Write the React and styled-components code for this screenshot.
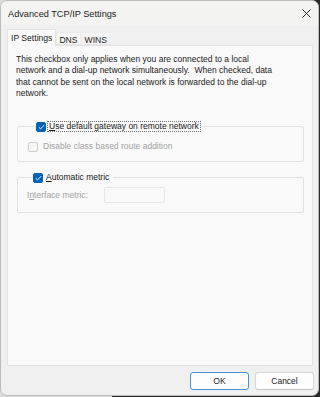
import React from "react";
import styled, { createGlobalStyle } from "styled-components";

const Global = createGlobalStyle`
  html, body { margin: 0; padding: 0; }
  body {
    width: 320px;
    height: 397px;
    overflow: hidden;
    background: linear-gradient(to right, #dcdcdc 0, #dcdcdc 112px, #2a2a2a 112px);
    font-family: "Liberation Sans", Arial, sans-serif;
  }
  * { box-sizing: border-box; }
`;

const Window = styled.div`
  width: 319px;
  height: 396px;
  border: 1px solid #bdbdbd;
  border-radius: 7px;
  background: #f0f0f0;
  display: flex;
  flex-direction: column;
  overflow: hidden;
`;

const TitleBar = styled.div`
  height: 24px;
  flex: none;
  display: flex;
  align-items: center;
  padding: 0 7px 0 7px;
  background: #f3f3f2;
`;

const Title = styled.div`
  font-size: 9.2px;
  color: #1b1b1b;
  flex: 1;
  padding-top: 1px;
`;

const CloseButton = styled.div`
  width: 9px;
  height: 9px;
  display: flex;
  margin-top: 1px;
  svg { display: block; }
`;

const Body = styled.div`
  flex: 1;
  display: flex;
  flex-direction: column;
  padding: 4px 5px 0 6px;
`;

const TabList = styled.div`
  display: flex;
  align-items: flex-end;
  height: 16px;
  flex: none;
`;

const Tab = styled.div`
  position: relative;
  z-index: ${(p) => (p.$active ? 1 : 0)};
  height: ${(p) => (p.$active ? "17px" : "13px")};
  margin-bottom: ${(p) => (p.$active ? "-1px" : "0")};
  margin-left: ${(p) => (p.$gap ? "1px" : "0")};
  padding: ${(p) => (p.$active ? "3px 3px 0" : "2px 2px 0")};
  font-size: 8.6px;
  color: #1a1a1a;
  background: ${(p) => (p.$active ? "#f9f9f9" : "#f5f5f5")};
  border: 1px solid ${(p) => (p.$active ? "#e4e4e4" : "#ececec")};
  border-bottom: ${(p) => (p.$active ? "none" : "1px solid #e4e4e4")};
  white-space: nowrap;
`;

const Panel = styled.div`
  flex: 1;
  display: flex;
  flex-direction: column;
  background: #f9f9f9;
  border: 1px solid #e4e4e4;
  padding: 8px 8px 0 8px;
`;

const Paragraph = styled.p`
  margin: 0;
  font-size: 8.5px;
  line-height: 11.3px;
  color: #1a1a1a;
  white-space: nowrap;
`;

const Group = styled.fieldset`
  margin: ${(p) => p.$top}px 0 0 1px;
  padding: 0 0 ${(p) => p.$bottom}px ${(p) => p.$inset}px;
  border: 1px solid #e0e0e0;
  border-radius: 2px;
  min-width: 0;
`;

const Legend = styled.legend`
  display: flex;
  align-items: center;
  gap: 1px;
  height: 11px;
  padding: 0 2px 0 0;
  margin-left: ${(p) => p.$offset}px;
`;

const Box = styled.span`
  width: 10px;
  height: 10px;
  flex: none;
  border-radius: 2px;
  display: flex;
  align-items: center;
  justify-content: center;
  background: ${(p) => (p.$checked ? "#0063b8" : "#f6f6f6")};
  border: 1px solid ${(p) => (p.$checked ? "#0063b8" : "#cdcdcd")};
  svg { display: block; }
`;

const Label = styled.span`
  font-size: 8.5px;
  line-height: 9px;
  padding: 0 1px;
  color: ${(p) => (p.$disabled ? "#a3a3a3" : "#1a1a1a")};
  border: 1px dotted ${(p) => (p.$focused ? "#6b6b6b" : "transparent")};
  white-space: nowrap;
  u { text-underline-offset: 1px; }
`;

const Row = styled.div`
  display: flex;
  align-items: center;
  gap: ${(p) => p.$gap || 0}px;
  margin-top: ${(p) => p.$top}px;
  padding-left: ${(p) => p.$inset}px;
`;

const FieldLabel = styled.span`
  width: 77px;
  font-size: 8.5px;
  color: #a3a3a3;
  white-space: nowrap;
  u { text-underline-offset: 1px; }
`;

const Input = styled.div`
  width: 61px;
  height: 16px;
  border: 1px solid #e6e6e6;
  border-radius: 2px;
  background: #f9f9f9;
`;

const ButtonRow = styled.div`
  display: flex;
  justify-content: flex-end;
  gap: 6px;
  margin: 6px -1px 5px 0;
  flex: none;
`;

const Button = styled.div`
  width: ${(p) => p.$w}px;
  height: 18px;
  display: flex;
  align-items: center;
  justify-content: center;
  font-size: 8.5px;
  color: #1a1a1a;
  background: #fdfdfd;
  border: 1px solid ${(p) => (p.$primary ? "#4a90d6" : "#d6d6d6")};
  border-bottom-color: ${(p) => (p.$primary ? "#4a90d6" : "#c4c4c4")};
  border-radius: 3px;
`;

const Check = () => (
  <svg width="7" height="6" viewBox="0 0 7 6">
    <path d="M0.8 3.2 L2.6 4.9 L6.2 1.1" fill="none" stroke="#fff" strokeWidth="0.9" />
  </svg>
);

const Checkbox = ({ checked }) => (
  <Box $checked={checked}>{checked && <Check />}</Box>
);

export default function App() {
  return (
    <>
      <Global />
      <Window>
        <TitleBar>
          <Title>Advanced TCP/IP Settings</Title>
          <CloseButton>
            <svg width="9" height="9" viewBox="0 0 9 9">
              <path d="M0.5 0.5 L8.5 8.5 M8.5 0.5 L0.5 8.5" stroke="#303030" strokeWidth="1" fill="none" />
            </svg>
          </CloseButton>
        </TitleBar>
        <Body>
          <TabList>
            <Tab $active>IP Settings</Tab>
            <Tab>DNS</Tab>
            <Tab $gap>WINS</Tab>
          </TabList>
          <Panel>
            <Paragraph>
              This checkbox only applies when you are connected to a local
              <br />
              network and a dial-up network simultaneously.{"\u00a0 "}When checked, data
              <br />
              that cannot be sent on the local network is forwarded to the dial-up
              <br />
              network.
            </Paragraph>
            <Group $top={22} $bottom={9} $inset={10}>
              <Legend $offset={8}>
                <Checkbox checked />
                <Label $focused>
                  <u>U</u>se default gateway on remote network
                </Label>
              </Legend>
              <Row $top={9} $gap={3}>
                <Checkbox />
                <Label $disabled>Disable class based route addition</Label>
              </Row>
            </Group>
            <Group $top={10} $bottom={9} $inset={9}>
              <Legend $offset={6}>
                <Checkbox checked />
                <Label>
                  <u>A</u>utomatic metric
                </Label>
              </Legend>
              <Row $top={4}>
                <FieldLabel>
                  I<u>n</u>terface metric:
                </FieldLabel>
                <Input />
              </Row>
            </Group>
          </Panel>
          <ButtonRow>
            <Button $primary $w={59}>OK</Button>
            <Button $w={59}>Cancel</Button>
          </ButtonRow>
        </Body>
      </Window>
    </>
  );
}
